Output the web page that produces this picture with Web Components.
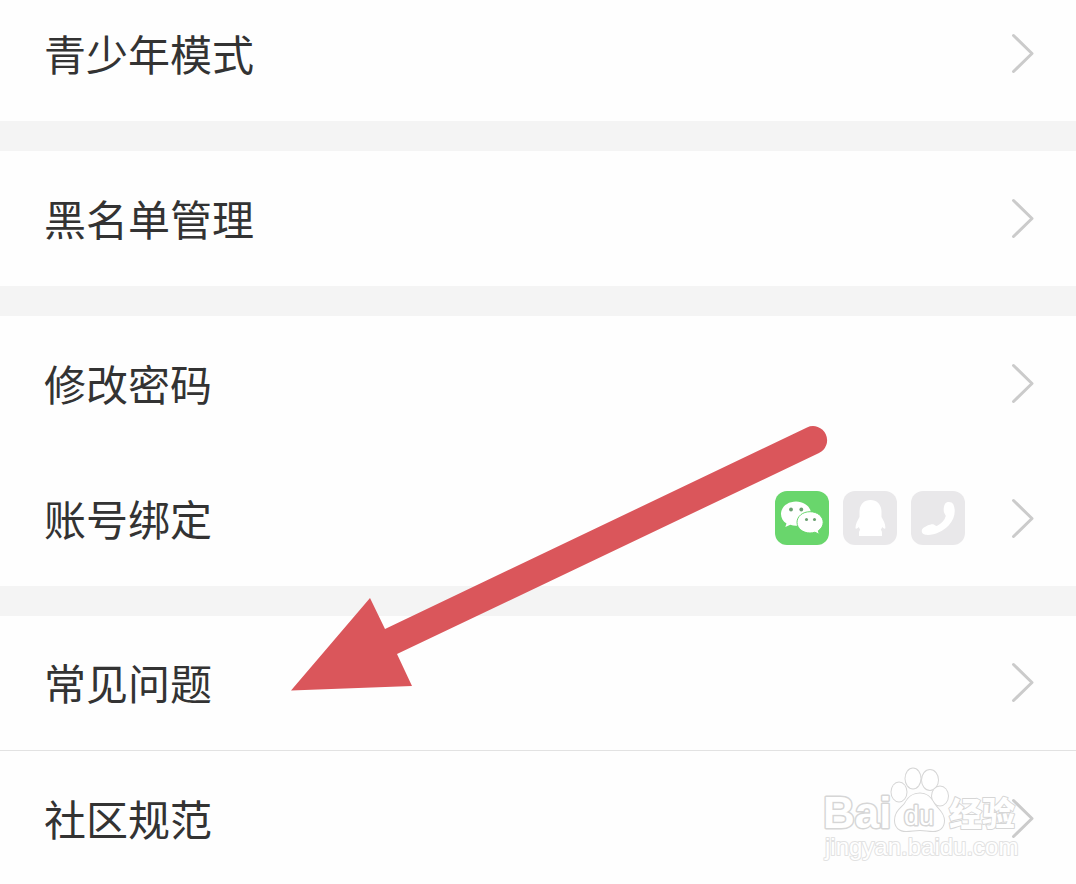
<!DOCTYPE html>
<html lang="zh-CN">
<head>
<meta charset="utf-8">
<meta name="viewport" content="width=device-width, initial-scale=1">
<title>设置</title>
<style>
  html, body { margin: 0; height: 100%; overflow: hidden; background: #fff; }
  body { font-family: "Noto Sans CJK SC", "Noto Sans", sans-serif; color: #333; }
</style>
</head>
<body>
<settings-page>
  <settings-group><settings-row>青少年模式</settings-row></settings-group>
  <settings-group><settings-row>黑名单管理</settings-row></settings-group>
  <settings-group>
    <settings-row>修改密码</settings-row>
    <settings-row>账号绑定<account-badges slot="extra"></account-badges></settings-row>
  </settings-group>
  <settings-group>
    <settings-row divided>常见问题</settings-row>
    <settings-row>社区规范</settings-row>
  </settings-group>
  <pointer-arrow slot="overlay"></pointer-arrow>
  <site-watermark slot="overlay"></site-watermark>
</settings-page>

<script>
const define = (name, html) => {
  const template = document.createElement('template');
  template.innerHTML = html;
  customElements.define(name, class extends HTMLElement {
    constructor() {
      super();
      this.attachShadow({ mode: 'open' }).append(template.content.cloneNode(true));
    }
  });
};

define('settings-page', `
  <style>
    :host { display: block; position: relative; height: 100%; overflow: hidden; }
    /* The list is scrolled slightly past the top of its first row. */
    main { display: flex; flex-direction: column; gap: 30px; margin-top: -14px; background: #f4f4f4; }
  </style>
  <main><slot></slot></main>
  <slot name="overlay"></slot>`);

define('settings-group', `
  <style>:host { display: block; background: #fefefe; }</style>
  <slot></slot>`);

define('settings-row', `
  <style>
    :host { display: block; }
    a {
      display: flex; align-items: center; gap: 46px; box-sizing: border-box;
      height: 135px; padding: 0 41px 2px 44px;
      color: inherit; text-decoration: none; font-size: 42px; line-height: 60px;
    }
    :host([divided]) a { border-bottom: 1px solid #e2e2e2; }
    .label { flex: 1; }
    svg { display: block; flex: none; }
  </style>
  <a href="#">
    <span class="label"><slot></slot></span>
    <slot name="extra"></slot>
    <svg width="24" height="40" viewBox="0 0 24 40" fill="none" stroke="#cbcbcb" stroke-width="3" stroke-linecap="round" stroke-linejoin="round" aria-hidden="true"><path d="M2.5 2.5 21 20.500 2.5 38.500"/></svg>
  </a>`);

define('account-badges', `
  <style>
    :host { display: flex; gap: 14px; }
    svg { display: block; width: 54px; height: 54px; border-radius: 12px; background: #e9e8ea; }
    svg.on { background: #69d66c; }
  </style>
  <svg class="on" viewBox="0 0 54 54" role="img" aria-label="微信">
    <path fill="#fff" d="M21 10.500C12.500 10.500 6 16 6 23c0 4 2 7.300 5.500 9.600L10.300 36l5-2.200c1.800.6 3.700.9 5.700.9 8.500 0 15-5.200 15-12s-6.500-12.200-15-12.200z"/>
    <path fill="#fff" stroke="#69d66c" stroke-width="1" d="M35 20.700c-7.400 0-13 4.700-13 10.600S27.600 42 35 42c1.700 0 3.400-.3 4.900-.8l4.500 2.100-1.100-3.500c3-2 4.900-5 4.900-8.500 0-5.900-5.800-10.600-13.200-10.600z"/>
    <g fill="#6a9f70"><circle cx="16" cy="18.500" r="1.900"/><circle cx="26.300" cy="18.500" r="1.900"/><circle cx="31.500" cy="28.500" r="1.500"/><circle cx="39.500" cy="28.500" r="1.500"/></g>
  </svg>
  <svg viewBox="0 0 54 54" role="img" aria-label="QQ">
    <path fill="#fff" d="M27.500 9C20.600 9 16.500 14 16.500 21v5c-2 3.500-4 7.300-4 10.500 0 2 1.500 1.300 3.300-.5.4 1.200.9 2 1.400 2.800-.8.700-1.200 1.700-1.200 3V45h23v-3.200c0-1.300-.4-2.300-1.200-3 .5-.8 1-1.600 1.400-2.800 1.700 1.800 3.200 2.500 3.200.5 0-3.200-1.800-7-3.900-10.500v-5C38.500 14 34.400 9 27.500 9z"/>
  </svg>
  <svg viewBox="0 0 54 54" role="img" aria-label="手机">
    <path fill="#fff" d="M34 13c1.500-2.800 7-2.500 8.400.5 2.700 6 1.400 14.500-4.800 21-5.900 6.300-15.300 10.200-23 9.300-4-.5-5-4.300-2.600-6.500 2.300-2 7.600-4.500 10.200-4 1.400.3 2.200 1.600 3.600 1.800 4.700-2.400 7.700-5.400 9-10-.3-1.500-1.700-2.500-2-4.500-.3-2.500-.1-5.200 1.200-7.600z"/>
  </svg>`);

define('pointer-arrow', `
  <style>
    :host { position: absolute; left: 291px; top: 426px; pointer-events: none; }
    svg { display: block; }
  </style>
  <svg width="538" height="266" viewBox="0 0 538 266" aria-hidden="true">
    <path fill="#da565b" d="M0 264.500 79 172l15 31L516 1.500A14 14 0 0 1 528 27L106 228l15 32z"/>
  </svg>`);

define('site-watermark', `
  <style>
    :host { position: absolute; right: 54px; top: 764px; pointer-events: none; }
    svg { display: block; }
    text, .paw { fill: #fff; stroke: #d6d6d6; stroke-width: 2px; paint-order: stroke; stroke-linejoin: round; }
    .latin { font-family: "Liberation Sans", Arial, sans-serif; }
    .brand { font-size: 44px; font-weight: 700; stroke-width: 3px; }
    .du { font-size: 27px; stroke-width: 3px; }
    .han { font-family: "Noto Sans CJK SC", sans-serif; font-size: 33px; font-weight: 900; }
    .url { font-size: 24px; stroke: #e2e2e2; }
  </style>
  <svg width="200" height="100" viewBox="0 0 200 100" role="img" aria-label="Baidu 经验 jingyan.baidu.com">
    <text class="latin brand" x="1" y="64">Bai</text>
    <g class="paw">
      <ellipse cx="77" cy="28" rx="7.500" ry="9.500"/>
      <ellipse cx="91" cy="14.500" rx="7.500" ry="10"/>
      <ellipse cx="108" cy="16" rx="8" ry="10"/>
      <ellipse cx="118" cy="32" rx="8" ry="9.500"/>
      <path d="M98 29.500c-8 0-12 4-15 10-4 5-10 8-10 17 0 7 5 10.500 11 10.500 5 0 9-1 14-1s8 1 13 1c7 0 11-4 11-10.500 0-8-7-12-10-17-3-6-7-10-14-10z"/>
    </g>
    <text class="latin du" x="82" y="61">du</text>
    <text class="han" x="127" y="62">经验</text>
    <text class="latin url" x="3" y="91">jingyan.baidu.com</text>
  </svg>`);
</script>
</body>
</html>
